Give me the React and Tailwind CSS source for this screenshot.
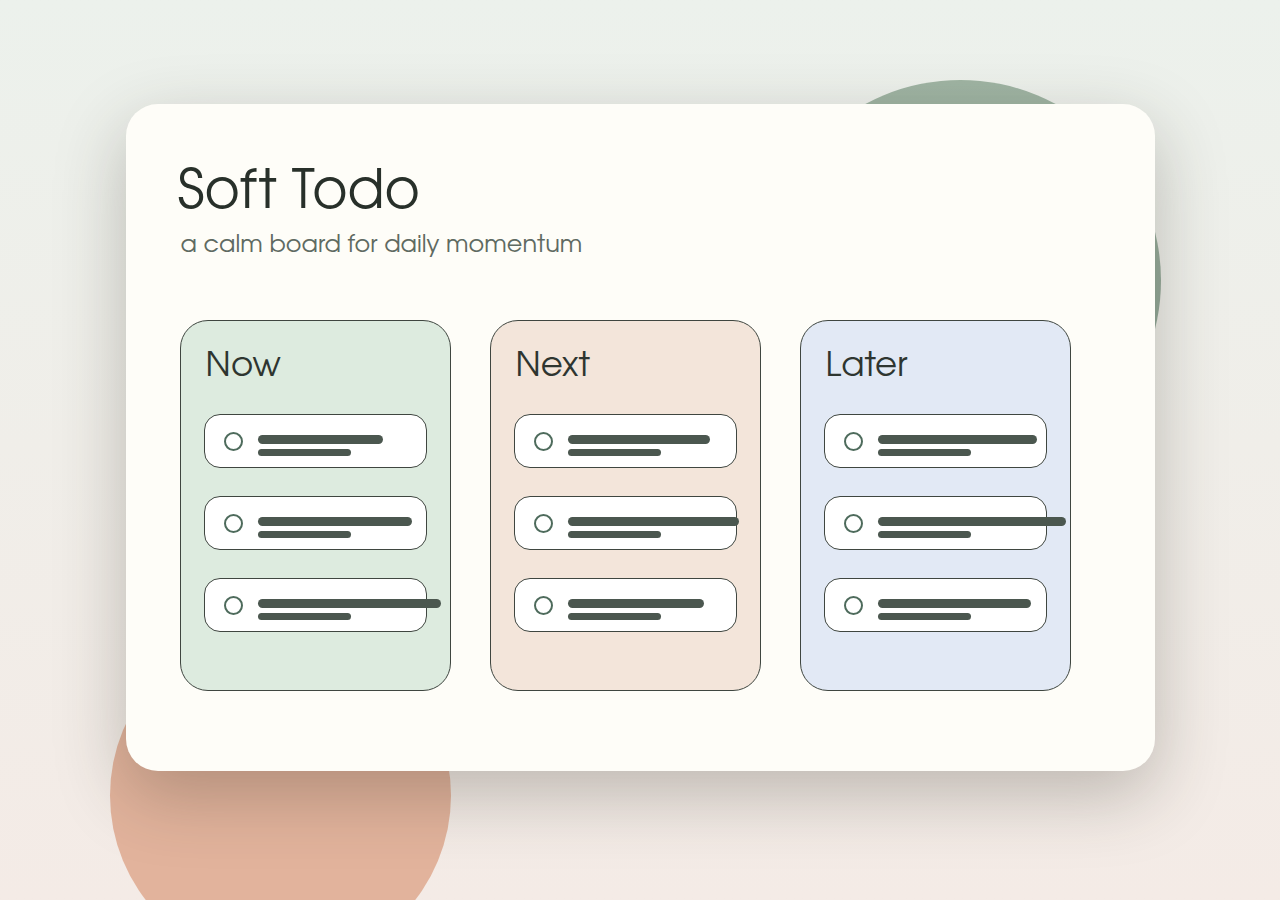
import React from "react";

// Board data: bar widths for each task row.
const columns = [
  { title: "Now", bg: "bg-[#ddebdf]", bars: [125, 154, 183] },
  { title: "Next", bg: "bg-[#f3e5da]", bars: [142, 171, 136] },
  { title: "Later", bg: "bg-[#e2e9f5]", bars: [159, 188, 153] },
];

const font = { fontFamily: '"URW Gothic", "URW Gothic L", "Century Gothic", "TeX Gyre Adventor", "Avant Garde", "Liberation Sans", sans-serif' };

function TaskRow({ width }) {
  return (
    <div className="flex h-[54px] w-[223px] items-start rounded-[16px] border border-[#3f4640] bg-white pl-[19px]">
      {/* Check circle */}
      <span className="mt-[17px] h-[19px] w-[19px] shrink-0 rounded-full border-2 border-[#4e6b5c]" />

      {/* Placeholder text lines */}
      <div className="ml-[15px] mt-[20px] flex flex-col gap-[5px]">
        <span className="block h-[9px] rounded-full bg-[#4b574f]" style={{ width }} />
        <span className="block h-[7px] w-[93px] rounded-full bg-[#4b574f]" />
      </div>
    </div>
  );
}

function Column({ title, bg, bars }) {
  return (
    <div className={`flex h-[371px] w-[271px] flex-col rounded-[28px] border border-[#3f4640] px-[23px] ${bg}`}>
      <h2 className="ml-[2px] mt-[26px] h-[67px] text-[34px] leading-[40px] text-[#2e3530]">{title}</h2>
      <div className="flex flex-col gap-[28px]">
        {bars.map((w, i) => (
          <TaskRow key={i} width={w} />
        ))}
      </div>
    </div>
  );
}

export default function App() {
  return (
    <div
      className="relative min-h-[900px] w-full overflow-hidden bg-gradient-to-b from-[#ecf1ec] to-[#f4ebe6]"
      style={font}
    >
      {/* Decorative blobs behind the card */}
      <div className="absolute left-[760px] top-[80px] h-[401px] w-[401px] rounded-full bg-gradient-to-b from-[#9fb4a3] to-[#8ba192]" />
      <div className="absolute left-[110px] top-[625px] h-[341px] w-[341px] rounded-full bg-[#e2b39c]" />

      {/* Main card */}
      <div className="relative mx-auto mt-[104px] h-[667px] w-[1029px] rounded-[32px] bg-[#fefdf8] px-[54px] pt-[57px] shadow-[0_24px_70px_rgba(50,45,35,0.28)]">
        <h1 className="ml-[-2px] text-[54px] leading-[64px] text-[#28302a]">Soft Todo</h1>
        <p className="ml-[1px] mt-[6px] text-[24px] leading-[30px] text-[#5f6a62]">a calm board for daily momentum</p>

        <div className="mt-[59px] flex gap-[39px]">
          {columns.map((c) => (
            <Column key={c.title} {...c} />
          ))}
        </div>
      </div>
    </div>
  );
}
